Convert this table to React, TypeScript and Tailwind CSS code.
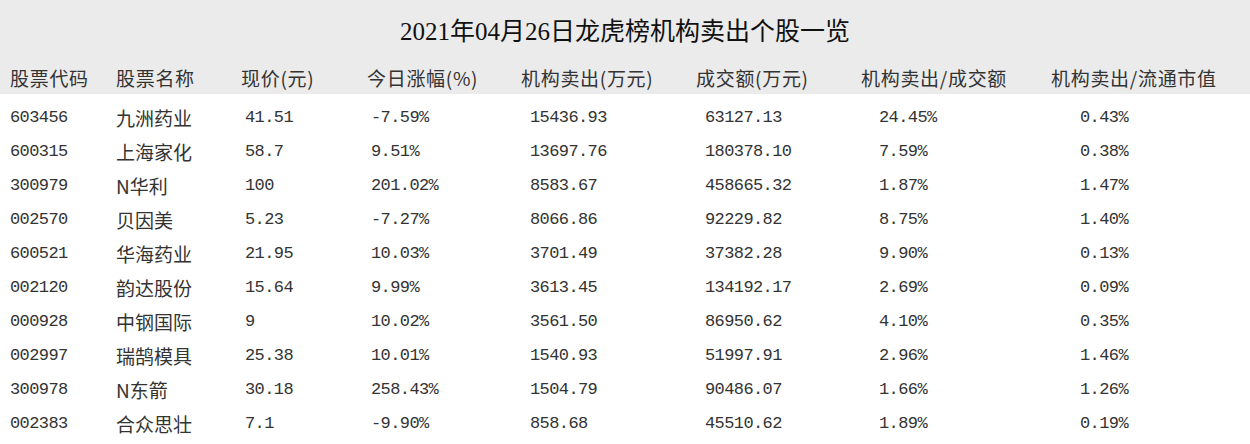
import React from "react";

const rows: string[][] = [
  ["603456", "九洲药业", "41.51", "-7.59%", "15436.93", "63127.13", "24.45%", "0.43%"],
  ["600315", "上海家化", "58.7", "9.51%", "13697.76", "180378.10", "7.59%", "0.38%"],
  ["300979", "N华利", "100", "201.02%", "8583.67", "458665.32", "1.87%", "1.47%"],
  ["002570", "贝因美", "5.23", "-7.27%", "8066.86", "92229.82", "8.75%", "1.40%"],
  ["600521", "华海药业", "21.95", "10.03%", "3701.49", "37382.28", "9.90%", "0.13%"],
  ["002120", "韵达股份", "15.64", "9.99%", "3613.45", "134192.17", "2.69%", "0.09%"],
  ["000928", "中钢国际", "9", "10.02%", "3561.50", "86950.62", "4.10%", "0.35%"],
  ["002997", "瑞鹄模具", "25.38", "10.01%", "1540.93", "51997.91", "2.96%", "1.46%"],
  ["300978", "N东箭", "30.18", "258.43%", "1504.79", "90486.07", "1.66%", "1.26%"],
  ["002383", "合众思壮", "7.1", "-9.90%", "858.68", "45510.62", "1.89%", "0.19%"],
];

const headers = [
  "股票代码",
  "股票名称",
  "现价(元)",
  "今日涨幅(%)",
  "机构卖出(万元)",
  "成交额(万元)",
  "机构卖出/成交额",
  "机构卖出/流通市值",
];

const dataPad = ["pl-0", "pl-0", "pl-[4px]", "pl-[4px]", "pl-[9px]", "pl-[9px]", "pl-[18px]", "pl-[29px]"];

const grid =
  "grid grid-cols-[106px_125px_126px_154px_175px_165px_190px_1fr] pl-[10px]";

const cjk = "font-['Noto_Sans_CJK_SC',sans-serif]";
const mono = "font-['Liberation_Mono','Noto_Sans_CJK_SC',monospace]";

export default function App() {
  return (
    <div className="w-[1250px] h-[444px] overflow-hidden bg-white text-[#333]">
      <div className="bg-[#ebebeb] h-[94px] flex flex-col">
        <div
          className={`h-[62px] flex items-center justify-center pt-[2px] text-[25px] text-[#111] font-['Liberation_Serif','Noto_Sans_CJK_SC',serif]`}
        >
          2021年04月26日龙虎榜机构卖出个股一览
        </div>
        <div className={`${grid} h-[30px] items-center ${cjk} text-[19px] leading-none tracking-[0.7px]`}>
          {headers.map((h) => (
            <div key={h} className="whitespace-nowrap">
              {h}
            </div>
          ))}
        </div>
      </div>
      <div className="pt-[7px]">
        {rows.map((r) => (
          <div key={r[0]} className={`${grid} h-[34px] items-center`}>
            {r.map((c, i) => (
              <div
                key={i}
                className={`${dataPad[i]} whitespace-nowrap ${
                  i === 1 ? `${cjk} text-[19px]` : `${mono} text-[17px] tracking-[-0.6px]`
                }`}
              >
                {c}
              </div>
            ))}
          </div>
        ))}
      </div>
    </div>
  );
}
